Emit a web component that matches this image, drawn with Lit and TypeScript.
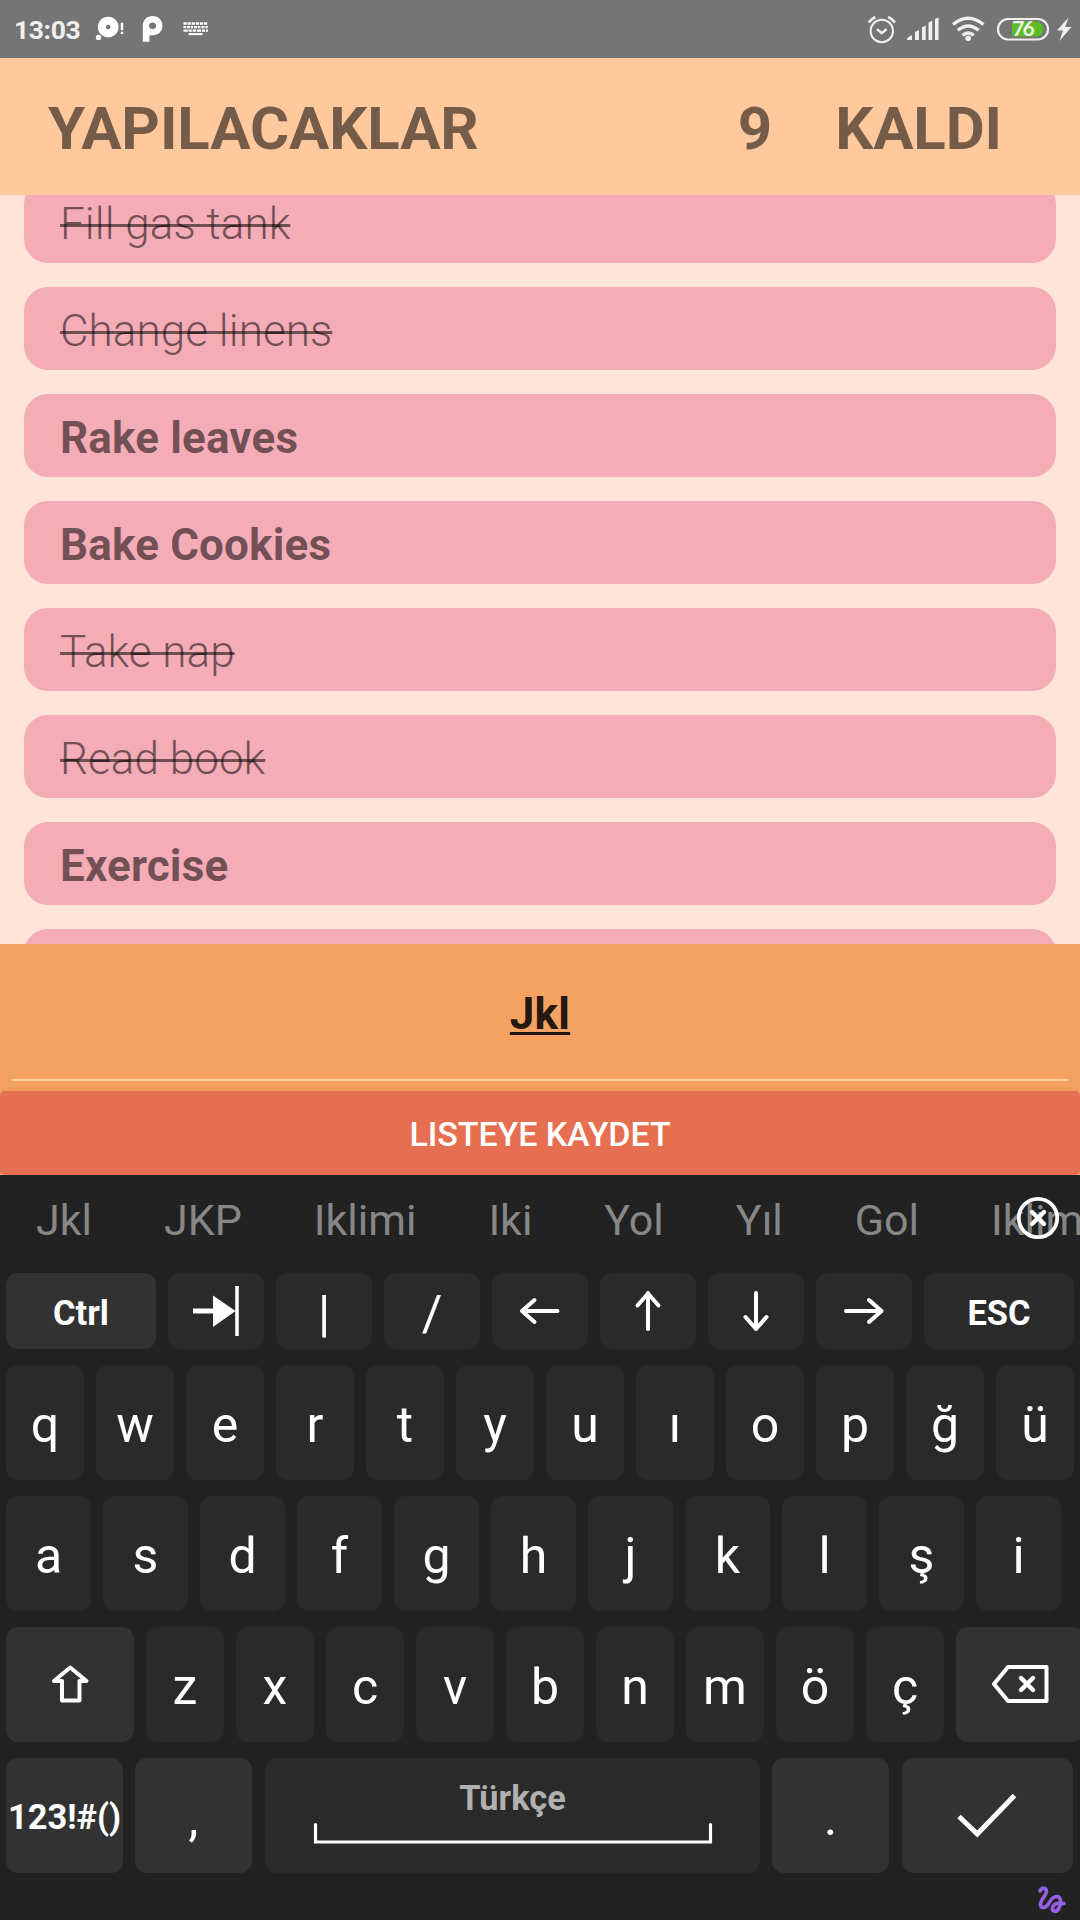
import { LitElement, html, svg, css } from "lit";
import { customElement, property } from "lit/decorators.js";
import { classMap } from "lit/directives/class-map.js";

@customElement("status-bar")
class StatusBar extends LitElement {
  static styles = css`
    :host {
      display: flex;
      flex: none;
      height: 58px;
      background: #757575;
      color: #f0f0f0;
      font-family: Roboto, sans-serif;
      justify-content: space-between;
    }
    .left,
    .right {
      display: flex;
    }
    .time {
      padding: 16px 0 0 14px;
      width: 76px;
      font-size: 26.500px;
      line-height: 27px;
      font-weight: 700;
      letter-spacing: -0.4px;
    }
    svg {
      display: block;
    }
    .level {
      font: 700 21px/21px Lato, sans-serif;
      letter-spacing: -2px;
    }
  `;
  render() {
    return html`
      <div class="left">
        <div class="time">13:03</div>
        <svg width="130" height="58" viewBox="90 0 130 58" fill="#fff">
          <path fill-rule="evenodd" d="M108.2 16.7a10.4 10.4 0 1 0 .01 0zM108.2 24.8a2.3 2.3 0 1 1-.01 0z" />
          <circle cx="98.5" cy="37.4" r="2.7" />
          <path d="M120.800 22.700h2.400v7.500h-2.400zM120.800 31.700h2.400v2.400h-2.400z" />
          <path fill-rule="evenodd" d="M142.8 41.8V26c0-6 4-10 10-10 5.600 0 9.700 4.200 9.700 9.600 0 5.700-4 9.700-9.500 9.700h-3.600v6.500zM152.600 22.500c-2.300 0-3.600 1.300-3.600 3.300 0 2 1.300 3.300 3.600 3.300 2.200 0 3.500-1.300 3.500-3.300 0-2-1.300-3.300-3.500-3.300z" />
          <path d="M183.500 23.500h24.500" stroke="#fff" stroke-width="2.600" stroke-dasharray="3.200 .9" />
          <path d="M183.500 27.200h24.500" stroke="#fff" stroke-width="2.300" stroke-dasharray="2.300 .9 3.200 .9" />
          <path d="M183.500 30.700h24.500" stroke="#fff" stroke-width="2.300" stroke-dasharray="4.200 .9 3.200 .9 3.200 .9" />
          <path d="M188.500 34.100h14" stroke="#fff" stroke-width="2" />
        </svg>
      </div>
      <div class="right">
        <svg width="220" height="58" viewBox="860 0 220 58" fill="none" stroke="#f0f0f0">
          <circle cx="881.800" cy="31" r="11.200" stroke-width="2" />
          <path d="M877 29.200l4.800 4 4.800-4" stroke-width="2.400" />
          <path d="M868.600 22.600q2.500-3.600 6.800-5.600M895 22.600q-2.500-3.600-6.800-5.600" stroke-width="2.600" />
          <g fill="#f0f0f0" stroke="none">
            <path d="M907 40v-1.500q2-2.500 5-3.200V40zM915 40v-8l4-2v10zM922 40V27.500l3.700-2V40zM928.500 40V22.500l3.700-2V40zM935 40V19l3.600-1.500V40z" />
          </g>
          <path d="M953 24.500q15-12.500 30.500 0M957.700 30.200q10.500-8.500 21 0M962.500 35.200q5.700-4.500 11.300 0" stroke-width="3.300" />
          <circle cx="968.200" cy="38.300" r="2.800" fill="#f0f0f0" stroke="none" />
          <path d="M1012 21.500h24a7.500 7.500 0 0 1 0 15h-24z" fill="#5cbd22" stroke="none" />
          <rect x="998" y="19" width="50" height="20.500" rx="10.250" stroke-width="2.200" />
          <text class="level" x="1012.300" y="36" fill="#f0f0f0" stroke="none">76</text>
          <path d="M1068.500 17.500l-11.500 13h6l-3.500 10.500 12-14h-6.300z" fill="#f0f0f0" stroke="none" />
        </svg>
      </div>
    `;
  }
}

interface Todo {
  title: string;
  done: boolean;
}

@customElement("todo-list")
class TodoList extends LitElement {
  @property({ attribute: false }) items: Todo[] = [];
  static styles = css`
    :host {
      display: flex;
      flex-direction: column;
      justify-content: flex-end;
      flex: none;
      height: 749px;
      overflow: hidden;
      background: #ffe4d9;
      font-family: Roboto, sans-serif;
    }
    .list {
      display: flex;
      flex-direction: column;
      gap: 24px;
      margin: 0 24px -68px;
    }
    .item {
      box-sizing: border-box;
      height: 83px;
      padding: 22px 36px 0;
      border-radius: 24px;
      background: #f4acb7;
      color: rgba(0, 0, 0, 0.54);
      font-size: 44px;
      line-height: 44px;
      font-weight: 700;
      letter-spacing: 0.15px;
    }
    .done {
      font-weight: 300;
      letter-spacing: 0.05px;
      text-decoration: line-through;
      text-decoration-thickness: 2.500px;
    }
  `;
  render() {
    return html`<div class="list">
      ${this.items.map(
        (i) => html`<div class=${classMap({ item: true, done: i.done })}>${i.title}</div>`
      )}
    </div>`;
  }
}

const ARROW_RIGHT = svg`<path d="M30 38H65M53 27l12.500 11L53 49" />`;

const ICONS: Record<string, { w: number; h: number; art: unknown }> = {
  tab: {
    w: 96,
    h: 76,
    art: svg`<path d="M25 38h21" stroke-width="5" stroke-linecap="butt" /><path d="M45 22.500v31.500L67.500 38z" fill="#fff" stroke="none" /><path d="M69 13v50" stroke-width="3.600" stroke-linecap="butt" />`,
  },
  right: { w: 96, h: 76, art: ARROW_RIGHT },
  left: { w: 96, h: 76, art: svg`<g transform="matrix(-1 0 0 1 95.500 0)">${ARROW_RIGHT}</g>` },
  up: { w: 96, h: 76, art: svg`<path d="M48 56V20M37.500 32.500L48 20.500l10.500 12" />` },
  down: { w: 96, h: 76, art: svg`<path d="M48 20V56M37.500 44L48 56l10.500-12" />` },
  shift: {
    w: 128,
    h: 115,
    art: svg`<path d="M64.200 40.500L80.500 54H73.500V73.500H56V54H48z" />`,
  },
  back: {
    w: 128,
    h: 115,
    art: svg`<path d="M52 40H90.500V74H52L38 57z" /><path d="M65 51l12 12M77 51L65 63" stroke-width="4.400" />`,
  },
  ok: {
    w: 171,
    h: 115,
    art: svg`<path d="M57 58.500l18.300 17.500L112.500 37.500" stroke-width="5" stroke-linecap="butt" stroke-linejoin="miter" />`,
  },
  space: {
    w: 495,
    h: 115,
    art: svg`<path d="M50.500 66.500V84H445.500V66.500" stroke-width="3.200" stroke-linejoin="miter" />`,
  },
};

interface Key {
  label?: string;
  icon?: string;
  w: number;
  alt?: boolean;
  kind?: string;
}

const letters = (s: string, w: number): Key[] => [...s].map((label) => ({ label, w }));

const ROWS: { cls: string; keys: Key[] }[] = [
  {
    cls: "row short",
    keys: [
      { label: "Ctrl", w: 150, alt: true, kind: "word" },
      { icon: "tab", w: 96 },
      { label: "|", w: 96 },
      { label: "/", w: 96 },
      { icon: "left", w: 96 },
      { icon: "up", w: 96 },
      { icon: "down", w: 96 },
      { icon: "right", w: 96 },
      { label: "ESC", w: 150, kind: "word" },
    ],
  },
  { cls: "row", keys: letters("qwertyuıopğü", 78) },
  { cls: "row", keys: letters("asdfghjklşi", 85) },
  {
    cls: "row",
    keys: [
      { icon: "shift", w: 128, alt: true },
      ...letters("zxcvbnmöç", 78),
      { icon: "back", w: 128, alt: true },
    ],
  },
  {
    cls: "row",
    keys: [
      { label: "123!#()", w: 117, alt: true, kind: "word low" },
      { label: ",", w: 117, alt: true },
      { label: "Türkçe", icon: "space", w: 495, kind: "word space nudge" },
      { label: ".", w: 117, alt: true },
      { icon: "ok", w: 171, alt: true, kind: "nudge" },
    ],
  },
];

@customElement("soft-keyboard")
class SoftKeyboard extends LitElement {
  static styles = css`
    :host {
      display: flex;
      flex-direction: column;
      flex: 1;
      min-height: 0;
      overflow: hidden;
      background: #222;
      font-family: Roboto, sans-serif;
      position: relative;
    }
    .suggestions {
      display: flex;
      flex: none;
      gap: 72px;
      height: 98px;
      box-sizing: border-box;
      padding: 23px 0 0 36px;
      color: #878787;
      font-size: 43px;
      line-height: 44px;
      white-space: nowrap;
    }
    .dismiss {
      position: absolute;
      left: 1016px;
      top: 21px;
    }
    .rows {
      display: flex;
      flex-direction: column;
      gap: 16px;
    }
    .row {
      display: flex;
      gap: 12px;
      padding-left: 6px;
      height: 115px;
    }
    .short {
      height: 76px;
    }
    .key {
      display: grid;
      flex: none;
      box-sizing: border-box;
      border-radius: 12px;
      background: #2a2a2a;
      color: #fff;
      text-align: center;
      font-size: 50px;
      line-height: 50px;
      overflow: hidden;
    }
    .alt {
      background: #323232;
    }
    .nudge {
      margin-left: 1px;
    }
    .key > * {
      grid-area: 1 / 1;
    }
    .label {
      padding-top: 35px;
    }
    .short .label {
      padding-top: 16px;
    }
    .word .label {
      font-size: 34.400px;
      line-height: 40px;
      font-weight: 700;
      padding-top: 20px;
      white-space: nowrap;
    }
    .low .label {
      padding-top: 39px;
    }
    .space .label {
      color: #b0b0b0;
    }
    svg {
      display: block;
    }
    .foot {
      display: flex;
      justify-content: flex-end;
      padding: 11px 13px 0 0;
    }
  `;
  render() {
    return html`
      <div class="suggestions">
        ${["Jkl", "JKP", "Iklimi", "Iki", "Yol", "Yıl", "Gol", "Iklim"].map(
          (s) => html`<span>${s}</span>`
        )}
      </div>
      <svg class="dismiss" width="44" height="44" fill="none" stroke="#fff">
        <circle cx="22" cy="22" r="19.200" stroke-width="3.800" />
        <path d="M16 16l12 12M28 16L16 28" stroke-width="4.400" stroke-linecap="round" />
      </svg>
      <div class="rows">
        ${ROWS.map(
          (r) => html`<div class=${r.cls}>
            ${r.keys.map((k) => {
              const icon = k.icon ? ICONS[k.icon] : null;
              return html`<div
                class=${"key " + (k.alt ? "alt " : "") + (k.kind ?? "")}
                style="width:${k.w}px"
              >
                ${k.label ? html`<span class="label">${k.label}</span>` : null}
                ${icon
                  ? html`<svg
                      width=${icon.w}
                      height=${icon.h}
                      fill="none"
                      stroke="#fff"
                      stroke-width="4"
                      stroke-linecap="round"
                      stroke-linejoin="round"
                    >
                      ${icon.art}
                    </svg>`
                  : null}
              </div>`;
            })}
          </div>`
        )}
      </div>
      <div class="foot">
        <svg width="30" height="32" viewBox="0 0 30 32" fill="none" stroke="#9561e2" stroke-width="3.600" stroke-linecap="round" stroke-linejoin="round">
          <path d="M3 7C4 4 9 3 9.500 7C10 11 3 16 3.500 20.500C4 25 9 24 11 20.500C13 17 15.500 12 20 12.500C25 13 24 21 21.500 25C19.500 28.500 15 28 15.500 24C16 20 21 18 27 19.500" />
        </svg>
      </div>
    `;
  }
}

@customElement("app-root")
class AppRoot extends LitElement {
  static styles = css`
    :host {
      display: flex;
      flex-direction: column;
      width: 1080px;
      height: 1920px;
      overflow: hidden;
      font-family: Roboto, sans-serif;
    }
    .header {
      display: flex;
      flex: none;
      box-sizing: border-box;
      height: 137px;
      padding: 41px 78px 0 48px;
      background: #ffc89d;
      color: rgba(0, 0, 0, 0.54);
      font-size: 60px;
      line-height: 60px;
      font-weight: 700;
      letter-spacing: -0.12px;
    }
    .title {
      flex: 1;
    }
    .count {
      margin-right: 63px;
    }
    .entry {
      display: flex;
      flex-direction: column;
      flex: none;
      box-sizing: border-box;
      height: 147px;
      padding: 48px 12px 0;
      background: #f4a261;
      text-align: center;
    }
    .text {
      height: 87px;
      border-bottom: 2px solid #fbd0a0;
      color: rgba(0, 0, 0, 0.87);
      font-size: 44px;
      line-height: 44px;
      font-weight: 700;
      letter-spacing: 0.2px;
    }
    .typed {
      text-decoration: underline;
      text-decoration-thickness: 2.500px;
      text-underline-offset: 3px;
      text-decoration-skip-ink: none;
    }
    .actions {
      flex: none;
      background: #f4a261;
    }
    .save {
      box-sizing: border-box;
      height: 84px;
      padding-top: 23px;
      border-radius: 5px;
      background: #e76f51;
      box-shadow: 0 0 5px rgba(120, 60, 0, 0.2);
      color: #fff;
      text-align: center;
      font-size: 34px;
      line-height: 40px;
      font-weight: 500;
      letter-spacing: -0.08px;
    }
  `;
  private items: Todo[] = [
    { title: "Fill gas tank", done: true },
    { title: "Change linens", done: true },
    { title: "Rake leaves", done: false },
    { title: "Bake Cookies", done: false },
    { title: "Take nap", done: true },
    { title: "Read book", done: true },
    { title: "Exercise", done: false },
    { title: "", done: false },
  ];
  render() {
    return html`
      <status-bar></status-bar>
      <div class="header">
        <span class="title">YAPILACAKLAR</span>
        <span class="count">9</span>
        <span>KALDI</span>
      </div>
      <todo-list .items=${this.items}></todo-list>
      <div class="entry">
        <div class="text"><span class="typed">Jkl</span></div>
      </div>
      <div class="actions"><div class="save">LISTEYE KAYDET</div></div>
      <soft-keyboard></soft-keyboard>
    `;
  }
}
